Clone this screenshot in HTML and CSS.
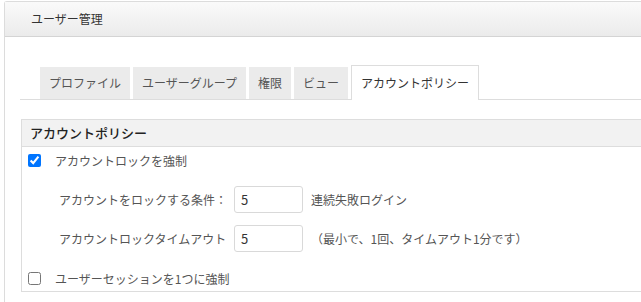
FILE: index.html
```
<!DOCTYPE html>
<html lang="ja">
<head>
    <meta charset="UTF-8">
    <meta name="viewport" content="width=device-width, initial-scale=1.0">
    <title>ユーザー管理</title>
    <link rel="stylesheet" href="styles.css">
</head>
<body>

<div class="panel">
    <div class="panel-head">ユーザー管理</div>
    <div class="panel-body">
        <ul class="tabs">
            <li class="tab">プロファイル</li>
            <li class="tab">ユーザーグループ</li>
            <li class="tab">権限</li>
            <li class="tab">ビュー</li>
            <li class="tab active">アカウントポリシー</li>
        </ul>

        <div class="section">
            <div class="section-head">アカウントポリシー</div>

            <label class="check-row">
                <input type="checkbox" checked>
                <span>アカウントロックを強制</span>
            </label>

            <div class="field-row">
                <label class="field-label" for="attempts">アカウントをロックする条件：</label>
                <input type="text" id="attempts" class="field-input" value="5">
                <span class="field-note">連続失敗ログイン</span>
            </div>

            <div class="field-row">
                <label class="field-label" for="timeout">アカウントロックタイムアウト</label>
                <input type="text" id="timeout" class="field-input" value="5">
                <span class="field-note">（最小で、1回、タイムアウト1分です）</span>
            </div>

            <label class="check-row last">
                <input type="checkbox">
                <span>ユーザーセッションを1つに強制</span>
            </label>
        </div>
    </div>
</div>

</body>
</html>
```

FILE: styles.css
```
body {
    margin: 0;
    font-family: "Noto Sans CJK JP", sans-serif;
    font-size: 12px;
    color: #555;
    overflow: hidden;
}
.panel {
    margin: 1px 0 0 4px;
    border: 1px solid #dcdcdc;
    border-right: none;
    border-bottom: none;
    border-radius: 3px 0 0 0;
    height: 300px;
}
.panel-head {
    height: 34px;
    line-height: 34px;
    padding-left: 26px;
    color: #333;
    background: linear-gradient(#fafafa, #ebebeb);
    border-bottom: 1px solid #d4d4d4;
}
.panel-body {
    padding: 28px 0 0 15px;
}
.tabs {
    display: flex;
    align-items: flex-end;
    gap: 3px;
    list-style: none;
    margin: 0;
    padding: 0 0 0 20px;
    border-bottom: 1px solid #ddd;
}
.tab {
    height: 32px;
    line-height: 32px;
    padding: 0 9px;
    text-align: center;
    background: #ebebeb;
    color: #555;
}
.tab.active {
    height: 34px;
    line-height: 34px;
    padding: 0 9px;
    background: #fff;
    color: #333;
    border: 1px solid #ddd;
    border-bottom: none;
    margin-bottom: -1px;
}
.section {
    margin: 19px 0 0 1px;
    border: 1px solid #ddd;
    border-right: none;
}
.section-head {
    height: 26px;
    line-height: 26px;
    padding-left: 8px;
    font-size: 13px;
    font-weight: 500;
    color: #222;
    background: #f2f2f2;
    border-bottom: 1px solid #ddd;
}
.check-row {
    display: flex;
    align-items: center;
    gap: 14px;
    height: 26px;
    padding-left: 6px;
}
.check-row input {
    margin: 0;
    width: 13px;
    height: 13px;
}
.check-row.last {
    margin-top: 13px;
}
.field-row {
    display: flex;
    align-items: center;
    margin-top: 12px;
    padding-left: 37px;
}
.check-row + .field-row {
    margin-top: 13px;
}
.field-label {
    width: 175px;
    white-space: nowrap;
}
.field-input {
    box-sizing: border-box;
    width: 69px;
    height: 27px;
    padding: 0 6px;
    border: 1px solid #d9d9d9;
    border-radius: 3px;
    font-family: inherit;
    font-size: 13px;
    color: #333;
}
.field-note {
    margin-left: 8px;
    white-space: nowrap;
}
```
